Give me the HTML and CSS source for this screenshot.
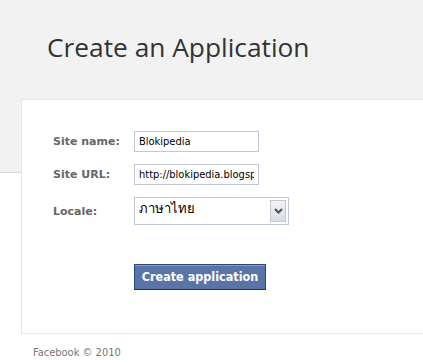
FILE: index.html
```html
<!DOCTYPE html>
<html lang="en">
<head>
  <meta charset="UTF-8">
  <title>Create an Application</title>
  <link rel="stylesheet" href="styles.css">
</head>
<body>
  <div class="header">
    <h1>Create an Application</h1>
  </div>

  <div class="panel">
    <form class="app-form">
      <label for="siteName">Site name:</label>
      <input type="text" id="siteName" value="Blokipedia">

      <label for="siteUrl">Site URL:</label>
      <input type="text" id="siteUrl" value="http://blokipedia.blogspot.com/">

      <label for="locale">Locale:</label>
      <div class="select">
        <span class="select-value">ภาษาไทย</span>
        <span class="select-arrow">
          <svg width="9" height="6" viewBox="0 0 9 6"><path d="M1 1 L4.5 4.5 L8 1" fill="none" stroke="#4a4f63" stroke-width="2"/></svg>
        </span>
      </div>

      <div class="actions">
        <button type="submit" class="btn">Create application</button>
      </div>
    </form>
  </div>

  <div class="footer">Facebook © 2010</div>
</body>
</html>
```

FILE: styles.css
```css
* {
  box-sizing: border-box;
}

body {
  margin: 0;
  background: #fff;
  font-family: "DejaVu Sans", Verdana, sans-serif;
  overflow: hidden;
}

.header {
  background: #f2f2f2;
  height: 173px;
  border-bottom: 1px solid #d9d9d9;
  padding: 29px 0 0 47px;
}

h1 {
  margin: 0;
  font-family: "Open Sans", sans-serif;
  font-weight: 400;
  font-size: 26.3px;
  color: #333;
}

.panel {
  position: relative;
  margin: -74px 0 0 21px;
  height: 235px;
  background: #fff;
  border: 1px solid #e5e5e5;
  border-right: none;
  padding: 31px 0 0 31px;
}

.app-form {
  display: grid;
  grid-template-columns: 81px auto;
  row-gap: 12px;
  align-items: center;
  justify-content: start;
}

label {
  color: #666;
  font-weight: bold;
  font-size: 11px;
}

input {
  width: 125px;
  height: 21px;
  border: 1px solid #bdc7d8;
  padding: 0 4px;
  font-family: "DejaVu Sans Condensed", "DejaVu Sans", sans-serif;
  font-size: 11px;
  color: #000;
}

.select {
  display: flex;
  justify-content: space-between;
  width: 155px;
  height: 28px;
  border: 1px solid #bdc7d8;
  padding: 2px 2px 2px 4px;
  font-size: 13px;
  color: #000;
}

.select-value {
  line-height: 17px;
}

.select-arrow {
  width: 16px;
  background: linear-gradient(#f4f4f6, #d9dbe3);
  border: 1px solid #c3c6d2;
  display: flex;
  align-items: center;
  justify-content: center;
}

.actions {
  grid-column: 2;
  padding-top: 27px;
}

.btn {
  width: 132px;
  height: 26px;
  background: #5b74a8;
  border: 1px solid #29447e;
  border-bottom-color: #1a356e;
  box-shadow: inset 0 1px 0 #8a9cc2;
  color: #fff;
  font-family: "DejaVu Sans Condensed", "DejaVu Sans", sans-serif;
  font-weight: bold;
  font-size: 12.5px;
  padding: 0 0 2px;
}

.footer {
  padding: 12px 0 0 33px;
  color: #777;
  font-family: "DejaVu Sans Condensed", "DejaVu Sans", sans-serif;
  font-size: 11px;
}
```
